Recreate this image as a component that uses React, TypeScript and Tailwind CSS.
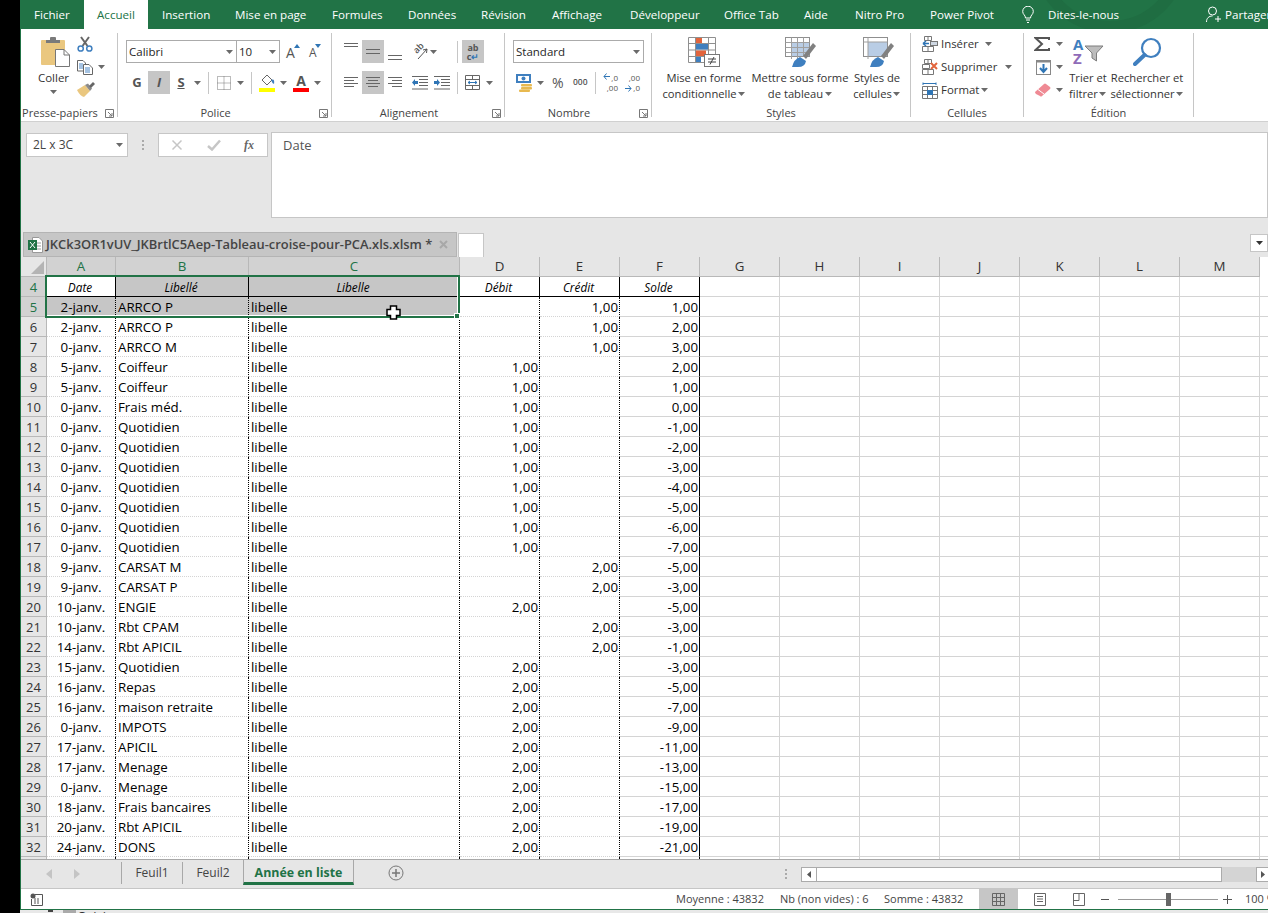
import React from "react";

const FONT = "[font-family:'Open_Sans','Noto_Sans',sans-serif]";

function Caret() {
  return (
    <span className="flex w-[8px] h-[10px] items-center justify-center shrink-0">
      <svg width="7" height="4" viewBox="0 0 7 4"><path d="M0 0H7L3.500 4Z" fill="#6a6a6a" /></svg>
    </span>
  );
}
function Sep() {
  return <span className="block w-px h-[22px] bg-[#c6c6c6] shrink-0" />;
}
function Lines({ ys, xs }: { ys: number[]; xs?: [number, number][] }) {
  return (
    <svg width="14" height="23" viewBox="0 0 14 23" className="shrink-0">
      {ys.map((y, i) => (
        <rect key={i} x={xs ? xs[i][0] : 0} y={y} width={xs ? xs[i][1] : 14} height="1" fill="#666" />
      ))}
    </svg>
  );
}
function Paste() {
  return (
    <svg width="29" height="30" viewBox="0 0 29 30">
      <rect x="0" y="3" width="24" height="25" rx="1" fill="#eac77f" />
      <rect x="5" y="3" width="14" height="3" fill="#7a7a7a" />
      <rect x="9" y="0" width="6" height="4" rx="1" fill="#7a7a7a" />
      <path d="M14.500 12.500H23L28.500 18V29.500H14.500Z" fill="#fff" stroke="#777" />
      <path d="M23 12.500V18H28.500" fill="none" stroke="#777" />
    </svg>
  );
}
function Scissors() {
  return (
    <svg width="16" height="16" viewBox="0 0 16 16">
      <path d="M4 1L10.500 10M12 1L5.500 10" stroke="#666" strokeWidth="2" fill="none" />
      <circle cx="3.700" cy="12.500" r="2.600" fill="none" stroke="#3f7fbf" strokeWidth="1.500" />
      <circle cx="12.300" cy="12.500" r="2.600" fill="none" stroke="#3f7fbf" strokeWidth="1.500" />
    </svg>
  );
}
function Copy() {
  return (
    <svg width="16" height="15" viewBox="0 0 16 15">
      <path d="M.5.5H6L8.500 3V11H.5Z" fill="#fff" stroke="#666" />
      <path d="M2 4H6M2 6H6M2 8H6" stroke="#4a86c5" />
      <path d="M6.500 4.500H12L15.500 8V14.500H6.500Z" fill="#fff" stroke="#666" />
      <path d="M8 8H13M8 10H13M8 12H13" stroke="#4a86c5" />
    </svg>
  );
}
function Painter() {
  return (
    <svg width="18" height="16" viewBox="0 0 18 16">
      <path d="M0 8L8 3L13 9L7 15Q3 14 0 8Z" fill="#eac77f" />
      <path d="M8 3L11 1.500L15 6.500L13 9Z" fill="#8a8a8a" />
      <path d="M12 4L16 0L18 2L14 6Z" fill="#666" />
    </svg>
  );
}
function Combo({ text, w, noBorderLeft }: { text: string; w: string; noBorderLeft?: boolean }) {
  return (
    <div className={`${w} ${noBorderLeft ? "border-l-0" : ""} h-[23px] bg-white border border-[#ababab] flex items-center justify-between pl-[2px] pr-[3px] text-[11.5px] text-[#262626]`}>
      <span>{text}</span>
      <Caret />
    </div>
  );
}
function GrowA({ up }: { up: boolean }) {
  return (
    <span className="relative block w-[15px] h-[17px] text-[#555]">
      <span className={`absolute left-0 bottom-0 leading-[15px] ${up ? "text-[14px]" : "text-[12px]"}`}>A</span>
      <svg className="absolute left-0 top-0" width="15" height="6" viewBox="0 0 15 6">
        {up ? <path d="M8 5L11 1L14 5Z" fill="#2f75b5" /> : <path d="M6 1H12L9 5Z" fill="#2f75b5" />}
      </svg>
    </span>
  );
}
function Borders() {
  return (
    <svg width="14" height="14" viewBox="0 0 14 14">
      <path d="M.5.5H13.500V13.500H.5ZM7 .5V13.500M.5 7H13.500" stroke="#777" fill="none" strokeDasharray="1 1" />
    </svg>
  );
}
function Fill() {
  return (
    <svg width="17" height="19" viewBox="0 0 17 19">
      <path d="M3 7L8 2L13 7L8 12Z" fill="#fff" stroke="#666" />
      <path d="M12 7Q16 5 15 11Q13 10 12 7Z" fill="#3f7fbf" />
      <rect x="0" y="15" width="16" height="4" fill="#ffff00" />
    </svg>
  );
}
function FontColor() {
  return (
    <div className="flex flex-col w-[16px] items-center">
      <span className="font-bold text-[14px] leading-[14px] text-[#555]">A</span>
      <span className="block w-[16px] h-[4px] bg-[#ff0000]" />
    </div>
  );
}
function Orient() {
  return (
    <span className="relative block w-[16px] h-[16px]">
      <span className="absolute left-[1px] top-[-1px] text-[9px] leading-[10px] font-semibold text-[#555] -rotate-45">ab</span>
      <svg className="absolute left-0 top-0" width="16" height="16" viewBox="0 0 16 16">
        <path d="M6 15L15 5M15 5L11 6M15 5L14.500 9" stroke="#555" fill="none" />
      </svg>
    </span>
  );
}
function Indent({ rev }: { rev?: boolean }) {
  return (
    <svg width="16" height="14" viewBox="0 0 16 14">
      <path d="M0 .5H16M7 3.500H16M7 6.500H16M7 9.500H16M0 13H16" stroke="#666" />
      {rev ? <path d="M0 5H3V3L6 6.500L3 10V8H0Z" fill="#2f75b5" /> : <path d="M6 5H3V3L0 6.500L3 10V8H6Z" fill="#2f75b5" />}
    </svg>
  );
}
function Merge() {
  return (
    <svg width="15" height="15" viewBox="0 0 15 15">
      <path d="M.5.5H14.500V14.500H.5ZM.5 4.500H14.500M.5 10.500H14.500M7.500 .5V4.500M7.500 10.500V14.500" stroke="#666" fill="none" />
      <path d="M3 7.500H12M3 7.500L5 6M3 7.500L5 9M12 7.500L10 6M12 7.500L10 9" stroke="#2f75b5" fill="none" />
    </svg>
  );
}
function Currency() {
  return (
    <svg width="17" height="18" viewBox="0 0 17 18">
      <rect x="0" y="0" width="15" height="9" fill="#3f7fbf" />
      <rect x="2" y="2" width="11" height="5" fill="#fff" />
      <circle cx="7.500" cy="4.500" r="2" fill="#3f7fbf" />
      <rect x="5" y="10" width="11" height="2.500" rx="1" fill="#e8b94f" />
      <rect x="5" y="13" width="11" height="2.500" rx="1" fill="#e8b94f" />
      <rect x="3" y="15.500" width="11" height="2.500" rx="1" fill="#e8b94f" />
    </svg>
  );
}
function CondFormat() {
  return (
    <svg width="32" height="30" viewBox="0 0 32 30">
      <path d="M.5.5H27.500V25.500H.5ZM7.500.5V25.500M20.500.5V25.500M.5 6.500H27.500M.5 13H27.500M.5 19.500H27.500" stroke="#8f8f8f" fill="none" />
      <rect x="8" y="1" width="6" height="5" fill="#e2643c" />
      <rect x="8" y="7" width="12" height="5.500" fill="#3f7fbf" />
      <rect x="8" y="13.500" width="10" height="5.500" fill="#e2643c" />
      <rect x="8" y="20" width="5" height="5" fill="#3f7fbf" />
      <rect x="16.500" y="17.500" width="15" height="12" fill="#fff" stroke="#777" />
      <path d="M20 22H28M20 25H28M26 20L22 27.500" stroke="#444" fill="none" />
    </svg>
  );
}
function TableStyle() {
  return (
    <svg width="31" height="30" viewBox="0 0 31 30">
      <rect x=".5" y=".5" width="24" height="19" fill="#fff" stroke="#8f8f8f" />
      <rect x="6" y="5" width="18" height="14" fill="#b9cde5" />
      <path d="M6.500.5V22M12.500.5V22M18.500.5V20M.5 5.500H24.500M.5 10.500H24.500M.5 15.500H24.500" stroke="#9f9f9f" fill="none" />
      <path d="M18 19L28 6L31 9L21 22Z" fill="#808080" />
      <path d="M7 30Q9 22 15 20L21 24Q20 30 13 30Z" fill="#3f7fbf" />
    </svg>
  );
}
function CellStyle() {
  return (
    <svg className="ml-[3px]" width="31" height="30" viewBox="0 0 31 30">
      <rect x=".5" y=".5" width="24" height="19" fill="#fff" stroke="#8f8f8f" />
      <rect x="5" y="5" width="19" height="14" fill="#b9cde5" />
      <path d="M5 .5V22M.5 5H24.500" stroke="#9f9f9f" fill="none" />
      <path d="M18 19L28 6L31 9L21 22Z" fill="#808080" />
      <path d="M7 30Q9 22 15 20L21 24Q20 30 13 30Z" fill="#3f7fbf" />
    </svg>
  );
}
function CellIcon({ kind }: { kind: "ins" | "del" | "fmt" }) {
  if (kind === "fmt")
    return (
      <svg width="16" height="17" viewBox="0 0 16 17">
        <path d="M1 .5V3M14 .5V3M1 1.500H14" stroke="#2f75b5" fill="none" />
        <path d="M.5 4.500H15.500V16.500H.5ZM5.500 4.500V16.500M10.500 4.500V16.500M.5 8.500H15.500M.5 12.500H15.500" stroke="#777" fill="none" />
        <rect x="5" y="8" width="6" height="5" fill="#2f75b5" />
      </svg>
    );
  return (
    <svg width="16" height="16" viewBox="0 0 16 16">
      <path d="M2.500.5H9.500V4.500H2.500ZM6 .5V4.500M.5 10.500H11.500V15.500H.5ZM6 10.500V15.500" stroke="#777" fill="none" />
      {kind === "ins" ? (
        <>
          <path d="M1 7.500H7M1 7.500L4 5M1 7.500L4 10" stroke="#2f75b5" strokeWidth="1.500" fill="none" />
          <rect x="8.500" y="5.500" width="7" height="4" fill="#cfd8e3" stroke="#777" />
        </>
      ) : (
        <>
          <path d="M.5 5.500H7.500V9.500H.5Z" stroke="#777" fill="none" />
          <path d="M9 4L15 10M15 4L9 10" stroke="#e2643c" strokeWidth="2" fill="none" />
        </>
      )}
    </svg>
  );
}
function Sigma() {
  return (
    <svg width="16" height="14" viewBox="0 0 16 14">
      <path d="M15 3V1H1.500L8 7L1.500 13H15V11" fill="none" stroke="#555" strokeWidth="2" />
    </svg>
  );
}
function FillDown() {
  return (
    <svg width="15" height="15" viewBox="0 0 15 15">
      <rect x=".5" y=".5" width="14" height="14" fill="#fff" stroke="#888" />
      <rect x="0" y="0" width="15" height="2.500" fill="#888" />
      <path d="M7.500 4V11M4 8L7.500 12L11 8" stroke="#2f75b5" strokeWidth="2" fill="none" />
    </svg>
  );
}
function Eraser() {
  return (
    <svg width="16" height="14" viewBox="0 0 16 14">
      <path d="M0 9L9 1Q10 0 11 1L15 4Q16 5 15 6L7 13Q6 14 5 13L1 11Q0 10 0 9Z" fill="#ef8a94" />
      <path d="M3 6.500L9 11" stroke="#fff" />
    </svg>
  );
}
function SortIcon() {
  return (
    <span className="relative block w-[32px] h-[30px] font-bold text-[15px] leading-[14px]">
      <span className="absolute left-[1px] top-0 text-[#3f7fbf]">A</span>
      <span className="absolute left-[1px] top-[14px] text-[#8f6bb8]">Z</span>
      <svg className="absolute left-0 top-0" width="32" height="28" viewBox="0 0 32 28">
        <path d="M13 9H31L24.500 16V24L20 21V16Z" fill="#bdbdbd" stroke="#7d7d7d" />
      </svg>
    </span>
  );
}
function Magnifier() {
  return (
    <svg width="29" height="29" viewBox="0 0 29 29">
      <circle cx="18" cy="11" r="9" fill="none" stroke="#3f7fbf" strokeWidth="2.200" />
      <path d="M11.500 18L2 27" stroke="#3f7fbf" strokeWidth="4" strokeLinecap="round" />
    </svg>
  );
}
function Group({ label, className, launcher, children }: { label: string; className: string; launcher?: boolean; children: React.ReactNode }) {
  return (
    <div className={`${className} relative h-[84px] my-[4px] border-r border-[#c6c6c6] flex flex-col justify-between shrink-0`}>
      <div className="flex-1 min-h-0">{children}</div>
      <div className={`h-[16px] -mb-[4px] text-center text-[11px] leading-[16px] text-[#444] ${launcher ? "pr-[18px]" : ""}`}>{label}</div>
      {launcher && (
        <svg className="absolute right-[3px] bottom-[-1px]" width="9" height="9" viewBox="0 0 9 9">
          <path d="M.5 8.500V.5H8.500V8.500ZM3 3L7 7M4 7H7V4" stroke="#777" fill="none" />
        </svg>
      )}
    </div>
  );
}
function BigBtn({ w, icon, l1, l2 }: { w: string; icon: React.ReactNode; l1: string; l2: string }) {
  return (
    <div className={`${w} flex flex-col items-center pt-[4px] text-[11.2px] leading-[16px] text-[#333] whitespace-nowrap shrink-0`}>
      <div className="h-[30px] mb-[3px] flex items-start">{icon}</div>
      <div>{l1}</div>
      <div className="flex items-center gap-[1px]">
        {l2}
        <Caret />
      </div>
    </div>
  );
}

const TABS = [
  ["Insertion", "w-[73px]"],
  ["Mise en page", "w-[97px]"],
  ["Formules", "w-[76px]"],
  ["Données", "w-[73px]"],
  ["Révision", "w-[71px]"],
  ["Affichage", "w-[78px]"],
  ["Développeur", "w-[94px]"],
  ["Office Tab", "w-[80px]"],
  ["Aide", "w-[51px]"],
  ["Nitro Pro", "w-[75px]"],
  ["Power Pivot", "w-[112px]"],
];

function TitleBar() {
  return (
    <div className="relative h-[29px] bg-[#217346] flex text-[11.6px] leading-[29px] text-white whitespace-nowrap overflow-hidden shrink-0">
      <svg className="absolute left-[1000px] top-0" width="248" height="29" viewBox="0 0 248 29">
        <circle cx="89" cy="-45" r="72" fill="none" stroke="#1f6d42" strokeWidth="12" />
        <circle cx="89" cy="-45" r="40" fill="none" stroke="#1f6d42" strokeWidth="10" />
      </svg>
      <div className="relative shrink-0 w-[63px] pl-[13px]">Fichier</div>
      <div className="relative shrink-0 w-[64px] bg-white text-[#217346] text-center">Accueil</div>
      {TABS.map(([t, w]) => (
        <div key={t} className={`relative shrink-0 ${w} pl-[14px]`}>{t}</div>
      ))}
      <svg className="relative shrink-0 mt-[6px] ml-[-6px]" width="12" height="18" viewBox="0 0 12 18">
        <path d="M3.500 12C3.500 9 .7 8.500 .7 5.500A5.300 5.300 0 0 1 11.300 5.500C11.300 8.500 8.500 9 8.500 12ZM4 14H8M5 16.500H7" stroke="#fff" fill="none" />
      </svg>
      <div className="relative shrink-0 ml-[14px] w-[158px]">Dites-le-nous</div>
      <svg className="relative shrink-0 mt-[6px]" width="16" height="17" viewBox="0 0 16 17">
        <circle cx="6.500" cy="5" r="4" stroke="#fff" fill="none" />
        <path d="M.5 16C.5 12 3 10 6.500 10M12 10V16M9 13H15" stroke="#fff" fill="none" />
      </svg>
      <div className="relative shrink-0 ml-[3px]">Partager</div>
    </div>
  );
}

function Ribbon() {
  return (
    <div className="h-[93px] bg-white border-b border-[#d0d0d0] flex text-[#444] whitespace-nowrap overflow-hidden shrink-0">
      <Group label="Presse-papiers" className="w-[97px]" launcher>
        <div className="flex pl-[13px]">
          <div className="w-[39px] flex flex-col items-center pt-[4px] text-[11.5px] leading-[16px] text-[#333]">
            <span className="ml-[4px] block h-[30px]"><Paste /></span>
            <div className="mt-[3px]">Coller</div>
            <div className="mt-[1px]"><Caret /></div>
          </div>
          <div className="ml-[4px] flex flex-col gap-[1px]">
            <div className="h-[22px] flex items-center"><Scissors /></div>
            <div className="h-[22px] flex items-center"><Copy /><span className="ml-[4px]"><Caret /></span></div>
            <div className="h-[22px] flex items-center"><Painter /></div>
          </div>
        </div>
      </Group>

      <Group label="Police" className="w-[214px]" launcher>
        <div className="pl-[8px] pt-[7px]">
          <div className="flex items-center h-[23px]">
            <Combo text="Calibri" w="w-[111px]" />
            <Combo text="10" w="w-[43px]" noBorderLeft />
            <span className="ml-[6px]"><GrowA up /></span>
            <span className="ml-[8px]"><GrowA up={false} /></span>
          </div>
          <div className="flex items-center h-[23px] mt-[8px] text-[13px]">
            <span className="w-[22px] text-center font-bold text-[#555]">G</span>
            <span className="w-[22px] h-[23px] leading-[23px] bg-[#c6c6c6] text-center italic font-bold text-[#555]">I</span>
            <span className="w-[22px] text-center font-bold underline text-[#555]">S</span>
            <span className="ml-[1px]"><Caret /></span>
            <span className="ml-[7px]"><Sep /></span>
            <span className="ml-[8px]"><Borders /></span>
            <span className="ml-[5px]"><Caret /></span>
            <span className="ml-[7px]"><Sep /></span>
            <span className="ml-[7px]"><Fill /></span>
            <span className="ml-[3px]"><Caret /></span>
            <span className="ml-[6px]"><FontColor /></span>
            <span className="ml-[4px]"><Caret /></span>
          </div>
        </div>
      </Group>

      <Group label="Alignement" className="w-[173px]" launcher>
        <div className="pl-[12px] pt-[7px]">
          <div className="flex items-center h-[23px]">
            <Lines ys={[3, 6]} />
            <span className="ml-[4px] w-[22px] h-[23px] bg-[#c6c6c6] flex justify-center"><Lines ys={[9, 13]} /></span>
            <span className="ml-[4px]"><Lines ys={[15, 19]} /></span>
            <span className="ml-[10px]"><Orient /></span>
            <span className="ml-[1px]"><Caret /></span>
            <span className="ml-[20px]"><Sep /></span>
            <span className="ml-[4px] w-[22px] h-[23px] bg-[#c6c6c6] flex flex-col items-center text-[9px] leading-[9px] text-[#555] font-bold pt-[3px]">
              <span>ab</span>
              <span>c<span className="text-[#2f75b5]">↵</span></span>
            </span>
          </div>
          <div className="flex items-center h-[23px] mt-[8px]">
            <Lines ys={[6, 9, 12, 15]} xs={[[0, 14], [0, 10], [0, 14], [0, 10]]} />
            <span className="ml-[4px] w-[22px] h-[23px] bg-[#c6c6c6] flex justify-center">
              <Lines ys={[6, 9, 12, 15]} xs={[[0, 14], [2, 10], [0, 14], [2, 10]]} />
            </span>
            <span className="ml-[4px]"><Lines ys={[6, 9, 12, 15]} xs={[[0, 14], [4, 10], [0, 14], [4, 10]]} /></span>
            <span className="ml-[10px]"><Indent /></span>
            <span className="ml-[6px]"><Indent rev /></span>
            <span className="ml-[7px]"><Sep /></span>
            <span className="ml-[7px]"><Merge /></span>
            <span className="ml-[5px]"><Caret /></span>
          </div>
        </div>
      </Group>

      <Group label="Nombre" className="w-[147px]" launcher>
        <div className="pt-[7px]">
          <div className="ml-[8px]"><Combo text="Standard" w="w-[131px]" /></div>
          <div className="flex items-center h-[23px] mt-[8px] pl-[11px]">
            <span className="w-[16px]"><Currency /></span>
            <span className="ml-[4px]"><Caret /></span>
            <span className="ml-[8px] w-[13px] text-[14px] text-[#555]">%</span>
            <span className="ml-[8px] w-[14px] text-[8.5px] font-semibold text-[#555]">000</span>
            <span className="ml-[8px]"><Sep /></span>
            <span className="ml-[7px] w-[15px] flex flex-col gap-[1px] text-[8px] leading-[9px] text-[#555] items-end relative">
              <span>,0</span><span>,00</span>
              <svg className="absolute left-0 top-0" width="7" height="7" viewBox="0 0 7 7"><path d="M7 3.500H1M3.500 .5L1 3.500L3.500 6.500" stroke="#2f75b5" fill="none" /></svg>
            </span>
            <span className="ml-[7px] w-[15px] flex flex-col gap-[1px] text-[8px] leading-[9px] text-[#555] items-end relative">
              <span>,00</span><span>,0</span>
              <svg className="absolute left-0 bottom-0" width="7" height="7" viewBox="0 0 7 7"><path d="M0 3.500H6M3.500 .5L6 3.500L3.500 6.500" stroke="#2f75b5" fill="none" /></svg>
            </span>
          </div>
        </div>
      </Group>

      <Group label="Styles" className="w-[259px]">
        <div className="flex pl-[4px]">
          <BigBtn w="w-[96px]" icon={<CondFormat />} l1="Mise en forme" l2="conditionnelle" />
          <BigBtn w="w-[96px]" icon={<TableStyle />} l1="Mettre sous forme" l2="de tableau" />
          <BigBtn w="w-[58px]" icon={<CellStyle />} l1="Styles de" l2="cellules" />
        </div>
      </Group>

      <Group label="Cellules" className="w-[113px]">
        <div className="pl-[11px] flex flex-col gap-[1px] text-[11.4px] text-[#333]">
          <div className="h-[22px] flex items-center"><span className="w-[15px]"><CellIcon kind="ins" /></span><span className="ml-[4px] w-[43px]">Insérer</span><Caret /></div>
          <div className="h-[22px] flex items-center"><span className="w-[15px]"><CellIcon kind="del" /></span><span className="ml-[4px] w-[63px]">Supprimer</span><Caret /></div>
          <div className="h-[22px] flex items-center"><span className="w-[15px]"><CellIcon kind="fmt" /></span><span className="ml-[4px] w-[39px]">Format</span><Caret /></div>
        </div>
      </Group>

      <Group label="Édition" className="w-[170px]">
        <div className="flex pl-[10px]">
          <div className="w-[31px] flex flex-col gap-[1px]">
            <div className="h-[22px] flex items-center"><span className="w-[16px] mr-[5px]"><Sigma /></span><Caret /></div>
            <div className="h-[22px] flex items-center"><span className="w-[16px] mr-[5px] pl-[2px]"><FillDown /></span><Caret /></div>
            <div className="h-[22px] flex items-center"><span className="w-[16px] mr-[5px] pl-[1px]"><Eraser /></span><Caret /></div>
          </div>
          <BigBtn w="w-[46px]" icon={<SortIcon />} l1="Trier et" l2="filtrer" />
          <BigBtn w="w-[72px]" icon={<Magnifier />} l1="Rechercher et" l2="sélectionner" />
        </div>
      </Group>
    </div>
  );
}

function FormulaBar() {
  return (
    <div className="h-[111px] bg-[#e6e6e6] flex items-start pl-[5px] pt-[10px] shrink-0">
      <div className="mt-[1px] w-[102px] h-[24px] bg-white border border-[#c6c6c6] flex items-center justify-between pl-[6px] pr-[4px] text-[12px] text-[#444]">
        2L x 3C
        <Caret />
      </div>
      <div className="mt-[1px] w-[30px] h-[24px] flex flex-col items-center justify-center gap-[2px]">
        <span className="block w-[2px] h-[2px] bg-[#aaa]" />
        <span className="block w-[2px] h-[2px] bg-[#aaa]" />
        <span className="block w-[2px] h-[2px] bg-[#aaa]" />
      </div>
      <div className="mt-[1px] w-[110px] h-[24px] bg-white border border-[#c6c6c6] flex items-center pl-[12px]">
        <svg width="12" height="12" viewBox="0 0 12 12"><path d="M1.500 1.500L10.500 10.500M10.500 1.500L1.500 10.500" stroke="#c6c6c6" strokeWidth="1.500" /></svg>
        <svg className="ml-[24px]" width="14" height="12" viewBox="0 0 14 12"><path d="M1 7L5 10.500L13 1.500" stroke="#c6c6c6" strokeWidth="2.500" fill="none" /></svg>
        <span className="ml-[23px] italic font-bold text-[12px] [font-family:'Liberation_Serif',serif] text-[#666]">fx</span>
      </div>
      <div className="ml-[3px] flex-1 h-[86px] bg-white border border-[#c6c6c6] pl-[11px] pt-[3px] text-[13px] leading-[18px] text-[#555]">Date</div>
    </div>
  );
}

function DocTabs() {
  return (
    <div className="h-[24px] bg-[#e6e6e6] flex pl-[2px] relative shrink-0">
      <div className="w-[434px] h-[25px] -mt-[1px] bg-[#c6c6c6] border border-[#b4b4b4] flex items-center pl-[4px] text-[12.9px] font-semibold text-[#444] whitespace-nowrap">
        <svg className="shrink-0" width="15" height="16" viewBox="0 0 15 16">
          <path d="M4.500.5H11L14.500 4V15.500H4.500Z" fill="#fff" stroke="#999" />
          <path d="M8 6H13M8 9H13M8 12H13" stroke="#999" />
          <rect x="0" y="3" width="9" height="10" fill="#217346" />
          <path d="M2 5L7 11M7 5L2 11" stroke="#fff" />
        </svg>
        <span className="ml-[3px] w-[392px] shrink-0">JKCk3OR1vUV_JKBrtlC5Aep-Tableau-croise-pour-PCA.xls.xlsm *</span>
        <svg className="ml-[1px] shrink-0" width="9" height="9" viewBox="0 0 9 9"><path d="M1 1L8 8M8 1L1 8" stroke="#a8a8a8" strokeWidth="2" /></svg>
      </div>
      <div className="ml-[1px] w-[26px] h-[24px] bg-white border border-[#c6c6c6] border-b-0" />
      <div className="absolute right-0 top-[1px] w-[18px] h-[18px] bg-white border border-[#c6c6c6] flex items-center justify-center">
        <svg width="7" height="4" viewBox="0 0 7 4"><path d="M0 0H7L3.500 4Z" fill="#333" /></svg>
      </div>
    </div>
  );
}

const HEADERS = [
  ["A", "w-[69px]", true],
  ["B", "w-[133px]", true],
  ["C", "w-[211px]", true],
  ["D", "w-[80px]", false],
  ["E", "w-[80px]", false],
  ["F", "w-[80px]", false],
  ["G", "w-[80px]", false],
  ["H", "w-[80px]", false],
  ["I", "w-[80px]", false],
  ["J", "w-[80px]", false],
  ["K", "w-[80px]", false],
  ["L", "w-[80px]", false],
  ["M", "w-[80px]", false],
] as const;

const DATA: [number, string, string, string, string, string][] = [
  [5, "2-janv.", "ARRCO P", "", "1,00", "1,00"],
  [6, "2-janv.", "ARRCO P", "", "1,00", "2,00"],
  [7, "0-janv.", "ARRCO M", "", "1,00", "3,00"],
  [8, "5-janv.", "Coiffeur", "1,00", "", "2,00"],
  [9, "5-janv.", "Coiffeur", "1,00", "", "1,00"],
  [10, "0-janv.", "Frais méd.", "1,00", "", "0,00"],
  [11, "0-janv.", "Quotidien", "1,00", "", "-1,00"],
  [12, "0-janv.", "Quotidien", "1,00", "", "-2,00"],
  [13, "0-janv.", "Quotidien", "1,00", "", "-3,00"],
  [14, "0-janv.", "Quotidien", "1,00", "", "-4,00"],
  [15, "0-janv.", "Quotidien", "1,00", "", "-5,00"],
  [16, "0-janv.", "Quotidien", "1,00", "", "-6,00"],
  [17, "0-janv.", "Quotidien", "1,00", "", "-7,00"],
  [18, "9-janv.", "CARSAT M", "", "2,00", "-5,00"],
  [19, "9-janv.", "CARSAT P", "", "2,00", "-3,00"],
  [20, "10-janv.", "ENGIE", "2,00", "", "-5,00"],
  [21, "10-janv.", "Rbt CPAM", "", "2,00", "-3,00"],
  [22, "14-janv.", "Rbt APICIL", "", "2,00", "-1,00"],
  [23, "15-janv.", "Quotidien", "2,00", "", "-3,00"],
  [24, "16-janv.", "Repas", "2,00", "", "-5,00"],
  [25, "16-janv.", "maison retraite", "2,00", "", "-7,00"],
  [26, "0-janv.", "IMPOTS", "2,00", "", "-9,00"],
  [27, "17-janv.", "APICIL", "2,00", "", "-11,00"],
  [28, "17-janv.", "Menage", "2,00", "", "-13,00"],
  [29, "0-janv.", "Menage", "2,00", "", "-15,00"],
  [30, "18-janv.", "Frais bancaires", "2,00", "", "-17,00"],
  [31, "20-janv.", "Rbt APICIL", "2,00", "", "-19,00"],
  [32, "24-janv.", "DONS", "2,00", "", "-21,00"],
];

const cellBase = "h-[20px] shrink-0 border-b border-[#d4d4d4] leading-[21px] overflow-hidden whitespace-nowrap";
const headCell = "h-[20px] shrink-0 border-b border-b-black leading-[20px] italic text-[11.8px] text-center pr-[2px] overflow-hidden whitespace-nowrap";
const dotted = "border-r border-dotted border-r-black";
const solid = "border-r border-r-black";
const plain = "border-r border-r-[#d4d4d4]";

function RowHead({ n, on }: { n: number | string; on?: boolean }) {
  return (
    <div className={`w-[26px] h-[20px] shrink-0 border-b border-r border-[#b8b8b8] text-center text-[13px] leading-[20px] ${on ? "bg-[#d2d2d2] text-[#217346]" : "bg-[#e6e6e6] text-[#333]"}`}>{n}</div>
  );
}
function Blanks() {
  return (
    <>
      {[0, 1, 2, 3, 4, 5, 6, 7].map((i) => (
        <div key={i} className={`${cellBase} w-[80px] ${plain}`} />
      ))}
    </>
  );
}
function Sheet() {
  return (
    <div className="relative h-[602px] overflow-hidden text-[13.3px] text-black shrink-0">
      <div className="flex h-[20px]">
        <div className="w-[26px] h-[20px] shrink-0 bg-[#e6e6e6] border-b border-r border-[#b8b8b8] flex items-end justify-end p-[2px]">
          <svg width="13" height="13" viewBox="0 0 13 13"><path d="M13 0V13H0Z" fill="#b4b4b4" /></svg>
        </div>
        {HEADERS.map(([l, w, on]) => (
          <div key={l} className={`${w} h-[20px] shrink-0 text-center leading-[19px] border-b border-r border-[#b8b8b8] ${on ? "bg-[#d2d2d2] text-[#217346]" : "bg-[#e6e6e6] text-[#333]"}`}>{l}</div>
        ))}
      </div>
      <div className="flex">
        <RowHead n={4} on />
        <div className={`${headCell} w-[69px] ${solid}`}>Date</div>
        <div className={`${headCell} w-[133px] bg-[#c6c6c6] ${solid}`}>Libellé</div>
        <div className={`${headCell} w-[211px] bg-[#c6c6c6] ${solid}`}>Libelle</div>
        <div className={`${headCell} w-[80px] ${solid}`}>Débit</div>
        <div className={`${headCell} w-[80px] ${solid}`}>Crédit</div>
        <div className={`${headCell} w-[80px] ${solid}`}>Solde</div>
        <Blanks />
      </div>
      {DATA.map(([n, d, l, de, c, s]) => {
        const sel = n === 5;
        return (
          <div key={n} className="flex">
            <RowHead n={n} on={sel} />
            <div className={`${cellBase} w-[69px] text-center ${dotted} ${sel ? "bg-[#c6c6c6]" : ""}`}>{d}</div>
            <div className={`${cellBase} w-[133px] pl-[2px] ${dotted} ${sel ? "bg-[#c6c6c6]" : ""}`}>{l}</div>
            <div className={`${cellBase} w-[211px] pl-[2px] ${dotted} ${sel ? "bg-[#c6c6c6]" : ""}`}>libelle</div>
            <div className={`${cellBase} w-[80px] text-right pr-[1px] ${dotted}`}>{de}</div>
            <div className={`${cellBase} w-[80px] text-right pr-[1px] ${dotted}`}>{c}</div>
            <div className={`${cellBase} w-[80px] text-right pr-[1px] ${solid}`}>{s}</div>
            <Blanks />
          </div>
        );
      })}
      <div className="flex">
        <RowHead n="" />
        <div className={`${cellBase} w-[69px] ${dotted}`} />
        <div className={`${cellBase} w-[133px] ${dotted}`} />
        <div className={`${cellBase} w-[211px] ${dotted}`} />
        <div className={`${cellBase} w-[80px] ${dotted}`} />
        <div className={`${cellBase} w-[80px] ${dotted}`} />
        <div className={`${cellBase} w-[80px] ${solid}`} />
        <Blanks />
      </div>
      {/* selection rectangle */}
      <div className="absolute left-[24px] top-[18px] w-[415px] h-[43px] border-2 border-[#217346] pointer-events-none">
        <div className="w-full h-full border-r border-b border-white" />
        <div className="absolute right-[-2px] bottom-[-3px] w-[6px] h-[6px] bg-[#217346] border border-white" />
      </div>
      {/* mouse cursor */}
      <svg className="absolute left-[365px] top-[48px]" width="15" height="15" viewBox="0 0 15 15">
        <path d="M4.500 1H10.500V4.500H14V10.500H10.500V14H4.500V10.500H1V4.500H4.500Z" fill="#fff" stroke="#000" strokeWidth="1.500" />
      </svg>
    </div>
  );
}

function SheetTabs() {
  return (
    <div className="h-[29px] bg-[#e6e6e6] border-t border-[#a8a8a8] flex items-stretch text-[12px] text-[#444] shrink-0">
      <div className="w-[100px] shrink-0 flex items-center pl-[25px] gap-[22px]">
        <svg width="6" height="10" viewBox="0 0 6 10"><path d="M6 0V10L0 5Z" fill="#c4c4c4" /></svg>
        <svg width="6" height="10" viewBox="0 0 6 10"><path d="M0 0V10L6 5Z" fill="#c4c4c4" /></svg>
      </div>
      <div className="flex h-[22px] mt-[2px] shrink-0">
        <div className="w-[61px] border-l border-[#a8a8a8] text-center leading-[22px]">Feuil1</div>
        <div className="w-[61px] border-l border-[#a8a8a8] text-center leading-[22px]">Feuil2</div>
      </div>
      <div className="w-[111px] shrink-0 h-[25px] pt-[2px] border-x border-[#a8a8a8] border-b-[3px] border-b-[#217346] text-center text-[12.4px] font-bold text-[#217346] leading-[22px]">Année en liste</div>
      <div className="ml-[34px] shrink-0 flex items-center pb-[2px]">
        <svg width="16" height="16" viewBox="0 0 16 16">
          <circle cx="8" cy="8" r="7" fill="none" stroke="#777" />
          <path d="M4 8H12M8 4V12" stroke="#777" strokeWidth="1.500" />
        </svg>
      </div>
      <div className="ml-[381px] w-[2px] shrink-0 flex flex-col justify-center gap-[2px]">
        <span className="block w-[2px] h-[2px] bg-[#aaa]" />
        <span className="block w-[2px] h-[2px] bg-[#aaa]" />
        <span className="block w-[2px] h-[2px] bg-[#aaa]" />
      </div>
      <div className="ml-[14px] flex-1 min-w-0 flex items-center">
        <div className="h-[15px] w-[16px] shrink-0 bg-white border border-[#ababab] flex items-center justify-center">
          <svg width="4" height="7" viewBox="0 0 4 7"><path d="M4 0V7L0 3.500Z" fill="#555" /></svg>
        </div>
        <div className="h-[15px] w-[405px] shrink-0 bg-white border-y border-r border-[#ababab]" />
        <div className="h-[15px] flex-1 bg-[#d4d4d4]" />
        <div className="h-[15px] w-[12px] shrink-0 bg-white border border-[#ababab] border-r-0 flex items-center justify-center">
          <svg width="4" height="7" viewBox="0 0 4 7"><path d="M0 0V7L4 3.500Z" fill="#555" /></svg>
        </div>
      </div>
    </div>
  );
}

function StatusBar() {
  return (
    <div className="h-[22px] bg-white border-t border-[#c6c6c6] flex items-center text-[11px] text-[#444] whitespace-nowrap shrink-0">
      <svg className="ml-[9px] shrink-0" width="13" height="13" viewBox="0 0 13 13">
        <circle cx="3" cy="3" r="2.500" fill="#555" />
        <path d="M5 1.500H12.500V12.500H1.500V6" stroke="#555" fill="none" />
        <path d="M4 6H10M4 8H10M4 10H10" stroke="#555" strokeDasharray="2 1" />
      </svg>
      <span className="ml-[633px] w-[104px] shrink-0">Moyenne : 43832</span>
      <span className="w-[104px] shrink-0">Nb (non vides) : 6</span>
      <span className="w-[95px] shrink-0">Somme : 43832</span>
      <div className="w-[39px] h-[21px] shrink-0 bg-[#c6c6c6] flex items-center justify-center">
        <svg width="13" height="13" viewBox="0 0 13 13"><path d="M.5.5H12.500V12.500H.5ZM4.500.5V12.500M8.500.5V12.500M.5 4.500H12.500M.5 8.500H12.500" stroke="#666" fill="none" /></svg>
      </div>
      <svg className="ml-[16px] shrink-0" width="12" height="13" viewBox="0 0 12 13"><path d="M.5.5H11.500V12.500H.5ZM3 3.500H9M3 6H9M3 8.500H9" stroke="#666" fill="none" /></svg>
      <svg className="ml-[27px] shrink-0" width="12" height="13" viewBox="0 0 12 13"><path d="M.5.5H11.500V12.500H.5ZM6 .5V7.500H.5" stroke="#666" fill="none" /></svg>
      <span className="ml-[16px] block w-[8px] h-px bg-[#555] shrink-0" />
      <div className="ml-[9px] relative w-[100px] h-px bg-[#999] shrink-0">
        <span className="absolute left-[48px] top-[-6px] block w-[5px] h-[13px] bg-[#666]" />
      </div>
      <svg className="ml-[5px] shrink-0" width="9" height="9" viewBox="0 0 9 9"><path d="M0 4.500H9M4.500 0V9" stroke="#555" /></svg>
      <span className="ml-[13px] shrink-0">100 %</span>
    </div>
  );
}

export default function App() {
  return (
    <div className={`w-[1268px] h-[913px] overflow-hidden flex bg-black ${FONT}`}>
      <div className="w-[20px] shrink-0 bg-black" />
      <div className="w-[1248px] flex flex-col shrink-0">
        <div className="border-l border-[#217346] flex flex-col h-[910px] border-b bg-white overflow-hidden border-b-[#217346]">
          <TitleBar />
          <Ribbon />
          <FormulaBar />
          <DocTabs />
          <Sheet />
          <SheetTabs />
          <StatusBar />
        </div>
        <div className="h-[3px] bg-[#e8e8e8] overflow-hidden flex text-[13px] leading-[13px] text-[#333]">
          <span className="ml-[28px] w-[5px] h-[2px] bg-[#444]" />
          <span className="ml-[10px] w-[13px] h-[3px] bg-[#aaa]" />
          <span className="ml-[1px]">Cuisine</span>
        </div>
      </div>
    </div>
  );
}
